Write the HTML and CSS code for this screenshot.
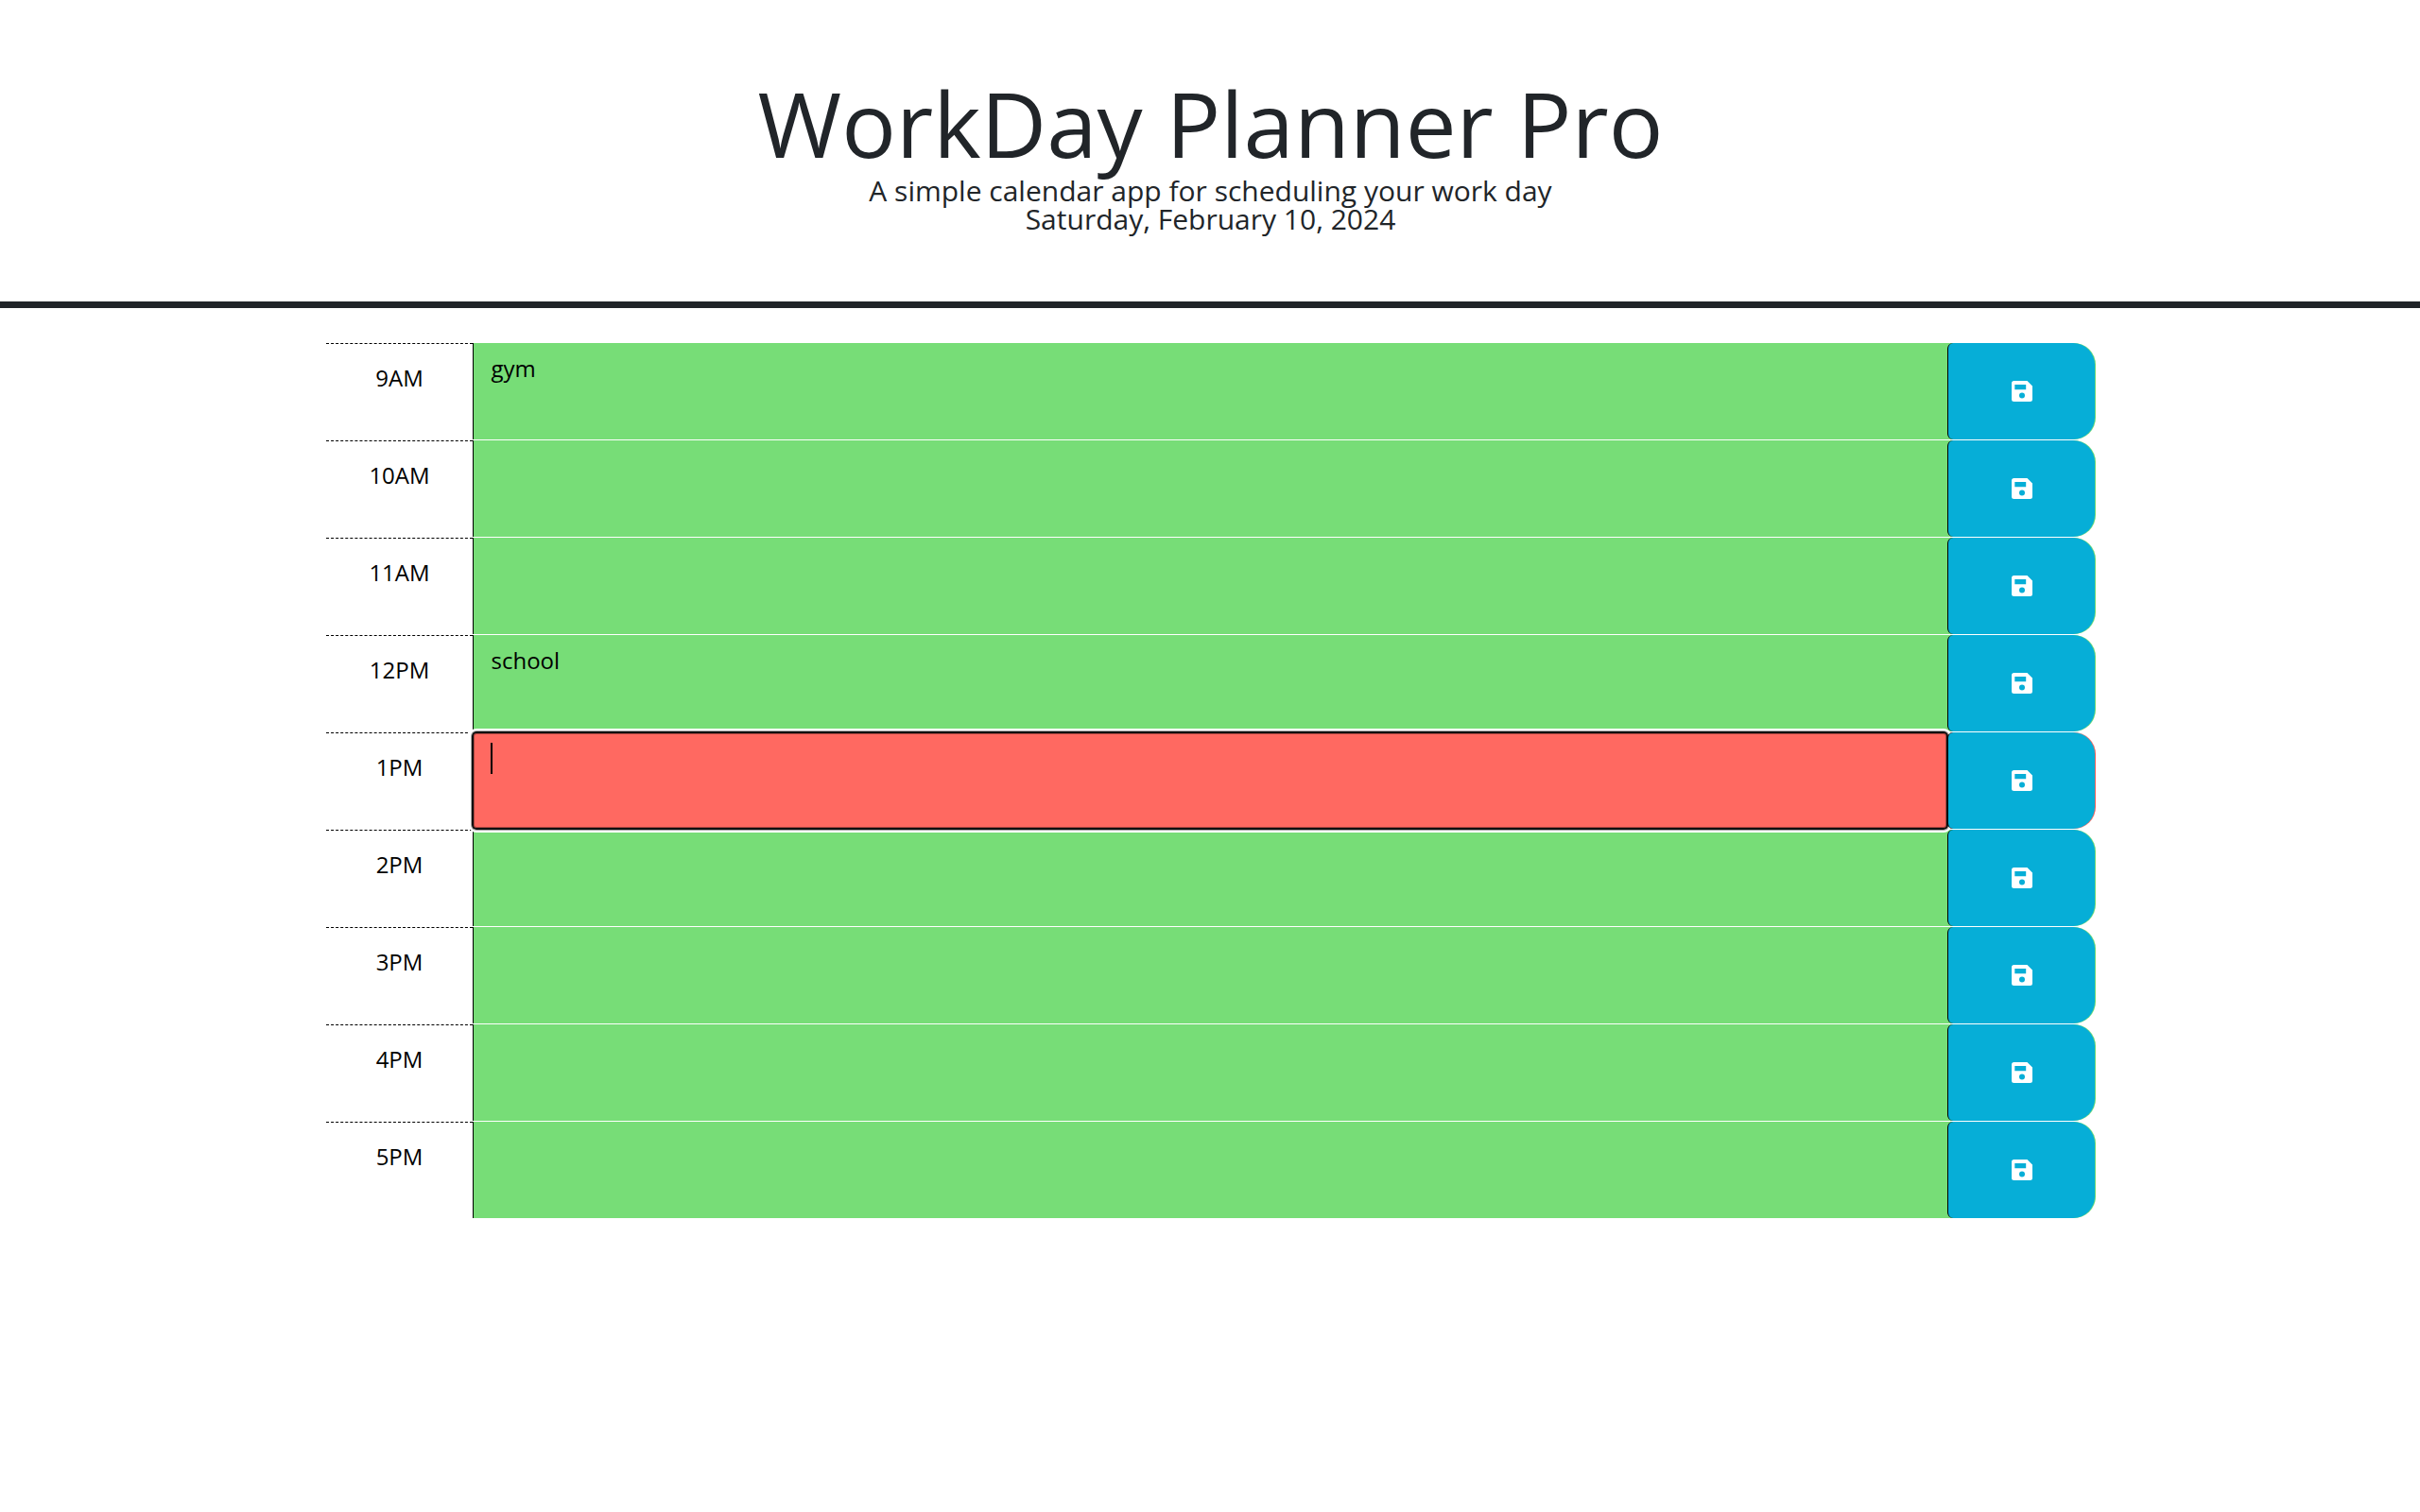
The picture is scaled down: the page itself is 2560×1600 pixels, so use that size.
FILE: index.html
```html
<!DOCTYPE html>
<html lang="en">
<head>
<meta charset="utf-8">
<title>WorkDay Planner Pro</title>
<link rel="stylesheet" href="styles.css">
</head>
<body>
<svg width="0" height="0" class="defs"><symbol id="save" viewBox="0 0 22 22"><path fill-rule="evenodd" d="M2.5 0H16.5L22 5.500V19.500A2.500 2.500 0 0 1 19.500 22H2.500A2.500 2.500 0 0 1 0 19.500V2.500A2.500 2.500 0 0 1 2.500 0ZM3.300 4V9.300H15.200V4ZM11 12.500A3 3 0 1 0 11 18.500A3 3 0 1 0 11 12.500Z"/></symbol></svg>
<header class="header">
<h1 class="title">WorkDay Planner Pro</h1>
<p class="lead">A simple calendar app for scheduling your work day</p>
<p class="lead">Saturday, February 10, 2024</p>
</header>
<main class="planner">
<div class="row"><div class="hour">9AM</div><div class="description">gym</div><button class="save" aria-label="save"><svg><use href="#save"/></svg></button></div>
<div class="row"><div class="hour">10AM</div><div class="description"></div><button class="save" aria-label="save"><svg><use href="#save"/></svg></button></div>
<div class="row"><div class="hour">11AM</div><div class="description"></div><button class="save" aria-label="save"><svg><use href="#save"/></svg></button></div>
<div class="row"><div class="hour">12PM</div><div class="description">school</div><button class="save" aria-label="save"><svg><use href="#save"/></svg></button></div>
<div class="row present"><div class="hour">1PM</div><div class="description"><span class="caret"></span></div><button class="save" aria-label="save"><svg><use href="#save"/></svg></button></div>
<div class="row"><div class="hour">2PM</div><div class="description"></div><button class="save" aria-label="save"><svg><use href="#save"/></svg></button></div>
<div class="row"><div class="hour">3PM</div><div class="description"></div><button class="save" aria-label="save"><svg><use href="#save"/></svg></button></div>
<div class="row"><div class="hour">4PM</div><div class="description"></div><button class="save" aria-label="save"><svg><use href="#save"/></svg></button></div>
<div class="row"><div class="hour">5PM</div><div class="description"></div><button class="save" aria-label="save"><svg><use href="#save"/></svg></button></div>
</main>
</body>
</html>
```
FILE: styles.css
```css
* { box-sizing: border-box; }
body {
  margin: 0;
  background: #fff;
  color: #212529;
  font-family: "Open Sans", sans-serif;
  font-size: 24px;
}
.defs { display: block; }
.header {
  height: 326px;
  padding: 82px 0 0 1px;
  border-bottom: 7px solid #212529;
  text-align: center;
}
.title {
  margin: 0;
  font-size: 96px;
  font-weight: 400;
  line-height: 96px;
  height: 104px;
}
.lead {
  margin: 0;
  font-size: 30px;
  line-height: 31px;
  height: 30px;
}
.planner {
  width: 1872px;
  margin: 37px 0 0 345px;
}
.row {
  display: grid;
  grid-template-columns: 155px 1560px 157px;
  height: 102px;
  margin-bottom: 1px;
  border-radius: 0 23px 23px 0;
  background: #77dd77;
}
.hour {
  padding-top: 18px;
  border-top: 1px dashed #000;
  background: #fff;
  color: #000;
  line-height: 35px;
  text-align: center;
}
.description {
  position: relative;
  padding: 9px 18.5px;
  border-left: 1px solid #000;
  color: #000;
  line-height: 35px;
}
.save {
  position: relative;
  z-index: 2;
  display: flex;
  align-items: center;
  justify-content: center;
  margin: 0;
  padding: 0;
  border: 0;
  border-left: 1px solid #000;
  border-radius: 6px 23px 23px 6px;
  background: #06aed7;
  width: 156.4px;
}
.save svg {
  width: 22px;
  height: 22px;
  fill: #fff;
}
.present { background: #ff6961; }
.present .description::after {
  content: "";
  position: absolute;
  z-index: 1;
  inset: -1px -1px -1px -2px;
  border: 2px solid #101010;
  border-radius: 5px;
  box-shadow: 0 0 0 1px #aaa, 0 0 0 3px #fff, inset 0 0 0 1px #a8453f;
}
.caret {
  display: block;
  width: 2px;
  height: 33px;
  margin: 2px 0 0 -0.5px;
  background: #000;
}
```
